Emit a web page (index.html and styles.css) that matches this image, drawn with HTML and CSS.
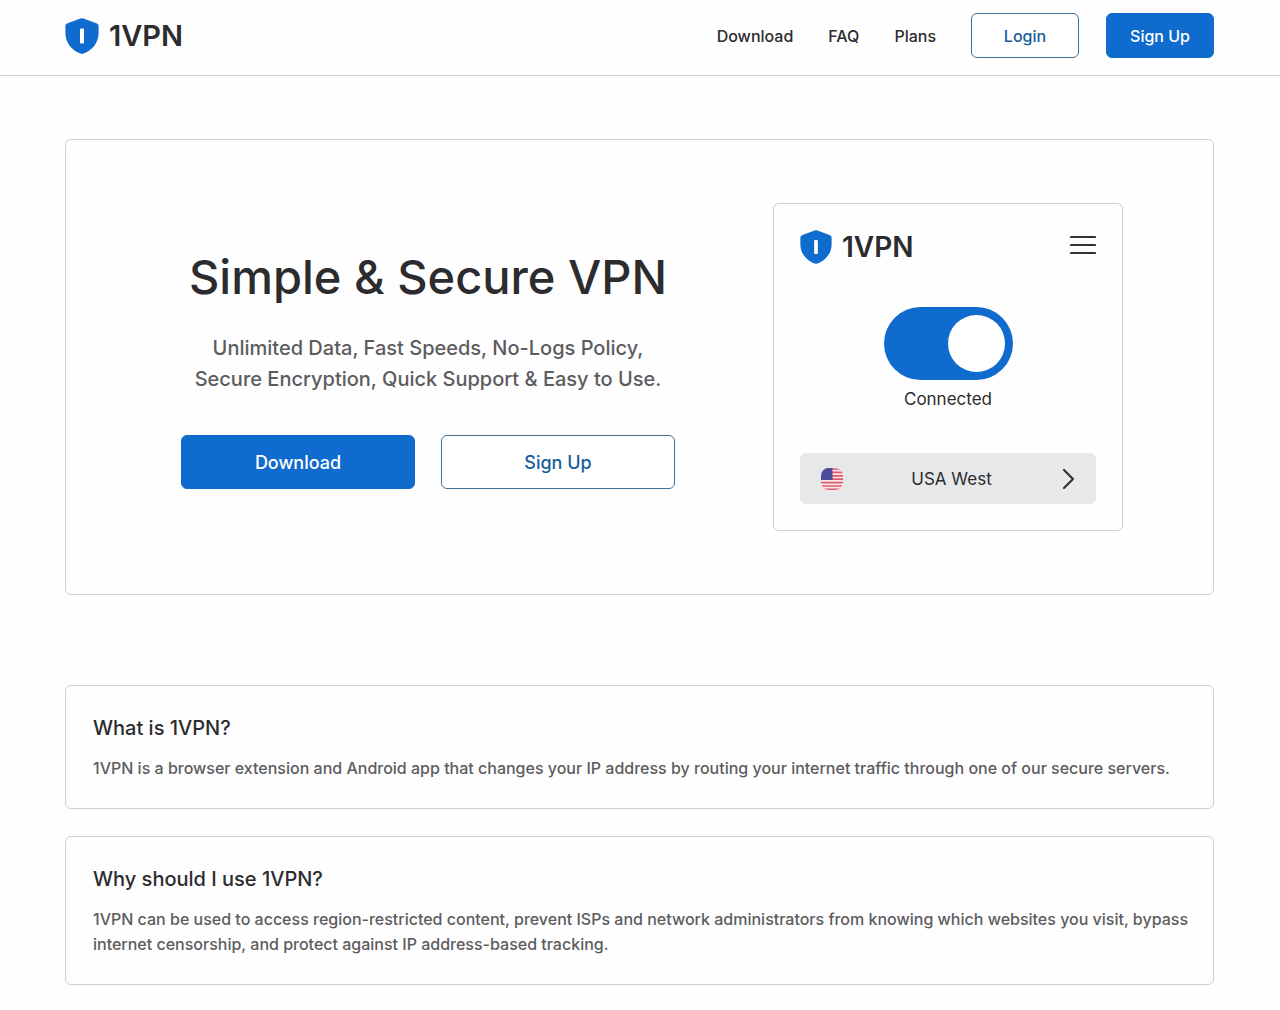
FILE: index.html
```html
<!DOCTYPE html>
<html lang="en">
<head>
<meta charset="utf-8">
<meta name="viewport" content="width=device-width, initial-scale=1">
<title>1VPN</title>
<link rel="stylesheet" href="styles.css">
</head>
<body>
<header class="site-header">
  <a class="brand" href="#">
    <svg class="brand-icon" viewBox="0 0 34 36" aria-hidden="true"><path fill="#0f6bce" d="M15.500 0.600 Q17 0 18.500 0.600 L32 5.400 Q33.600 6 33.600 8 V15 C33.600 25 27 32.500 18.500 35.600 Q17 36.200 15.500 35.600 C7 32.500 0.400 25 0.400 15 V8 Q0.400 6 2 5.400 Z"/><rect x="15" y="10.500" width="4" height="15" rx="1" fill="#fff"/></svg>
    <span>1VPN</span>
  </a>
  <nav class="nav">
    <div class="nav-links">
      <a href="#">Download</a>
      <a href="#">FAQ</a>
      <a href="#">Plans</a>
    </div>
    <div class="nav-actions">
      <button class="btn btn-outline" type="button">Login</button>
      <button class="btn btn-solid" type="button">Sign Up</button>
    </div>
  </nav>
</header>
<main class="page">
  <section class="hero">
    <div class="hero-copy">
      <h1>Simple &amp; Secure VPN</h1>
      <p>Unlimited Data, Fast Speeds, No-Logs Policy, Secure Encryption, Quick Support &amp; Easy to Use.</p>
      <div class="hero-actions">
        <button class="btn btn-large btn-solid" type="button">Download</button>
        <button class="btn btn-large btn-outline" type="button">Sign Up</button>
      </div>
    </div>
    <div class="app">
      <div class="app-bar">
        <div class="brand brand-small">
          <svg class="brand-icon" viewBox="0 0 34 36" aria-hidden="true"><path fill="#0f6bce" d="M15.500 0.600 Q17 0 18.500 0.600 L32 5.400 Q33.600 6 33.600 8 V15 C33.600 25 27 32.500 18.500 35.600 Q17 36.200 15.500 35.600 C7 32.500 0.400 25 0.400 15 V8 Q0.400 6 2 5.400 Z"/><rect x="15" y="10.500" width="4" height="15" rx="1" fill="#fff"/></svg>
          <span>1VPN</span>
        </div>
        <button class="menu" type="button" aria-label="Menu">
          <svg width="28" height="20" viewBox="0 0 28 20" aria-hidden="true"><path d="M3 2H27M3 10H27M3 18H27" stroke="#333" stroke-width="2.200" stroke-linecap="round"/></svg>
        </button>
      </div>
      <input class="toggle" id="connection" type="checkbox" checked>
      <label class="status" for="connection">Connected</label>
      <button class="location" type="button">
        <svg width="24" height="24" viewBox="0 0 24 24" aria-hidden="true">
          <defs><clipPath id="flag"><rect x="1" y="1" width="22" height="22" rx="8"/></clipPath></defs>
          <g clip-path="url(#flag)">
            <rect width="24" height="24" fill="#fae6e9"/>
            <path d="M0 2H24M0 5.400H24M0 8.800H24M0 12.200H24M0 15.600H24M0 19H24M0 22.400H24" stroke="#e25b6d" stroke-width="1.700"/>
            <rect width="12.500" height="13" fill="#4c4c9b"/>
          </g>
        </svg>
        <span>USA West</span>
        <svg width="20" height="24" viewBox="0 0 20 24" aria-hidden="true"><path d="M5 3L14 12L5 21" fill="none" stroke="#333" stroke-width="2.200" stroke-linecap="round" stroke-linejoin="round"/></svg>
      </button>
    </div>
  </section>
  <section class="questions">
    <article class="question">
      <h2>What is 1VPN?</h2>
      <p>1VPN is a browser extension and Android app that changes your IP address by routing your internet traffic through one of our secure servers.</p>
    </article>
    <article class="question">
      <h2>Why should I use 1VPN?</h2>
      <p>1VPN can be used to access region-restricted content, prevent ISPs and network administrators from knowing which websites you visit, bypass internet censorship, and protect against IP address-based tracking.</p>
    </article>
  </section>
</main>
</body>
</html>
```
FILE: styles.css
```css
* {
  box-sizing: border-box;
}

body {
  margin: 0;
  background: #fefefe;
  color: #2c2c2e;
  font-family: Inter, "Liberation Sans", sans-serif;
  font-size: 16px;
  font-weight: 500;
}

h1, h2, p {
  margin: 0;
  font-weight: 500;
}

a {
  color: inherit;
  text-decoration: none;
}

button {
  font: inherit;
  cursor: pointer;
}

.site-header {
  display: flex;
  align-items: center;
  justify-content: space-between;
  padding: 13px 66px 17px 65px;
  border-bottom: 1px solid #cfcfcf;
}

.brand {
  display: flex;
  align-items: center;
  gap: 10px;
  font-size: 29px;
  font-weight: 600;
  line-height: 36px;
}

.brand-icon {
  width: 34px;
  height: 36px;
}

.brand-small {
  font-size: 28px;
  line-height: 34px;
}

.brand-small .brand-icon {
  width: 32px;
  height: 34px;
}

.nav {
  display: flex;
  align-items: center;
  gap: 35px;
}

.nav-links {
  display: flex;
  gap: 35px;
}

.nav-actions {
  display: flex;
  gap: 27px;
}

.btn {
  width: 108px;
  height: 45px;
  padding: 0;
  border: 1px solid #0f6bce;
  border-radius: 6px;
}

.btn-solid {
  background: #0f6bce;
  color: #fff;
}

.btn-outline {
  background: #fff;
  border-color: #3f7099;
  color: #185c9c;
}

.btn-large {
  width: 234px;
  height: 54px;
  font-size: 18px;
}

.page {
  padding: 63px 66px 24px 65px;
}

.hero {
  display: flex;
  align-items: center;
  justify-content: center;
  gap: 98px;
  padding: 63px 0 63px 25px;
  border: 1px solid #cfcfcf;
  border-radius: 6px;
}

.hero-copy {
  width: 494px;
  text-align: center;
}

.hero-copy h1 {
  font-size: 47px;
  line-height: 64px;
}

.hero-copy p {
  margin: 24px 0 40px;
  color: #5c5c5e;
  font-size: 20px;
  line-height: 31px;
}

.hero-actions {
  display: flex;
  justify-content: space-between;
}

.app {
  display: flex;
  flex-direction: column;
  align-items: center;
  width: 350px;
  padding: 26px;
  border: 1px solid #cfcfcf;
  border-radius: 6px;
}

.app-bar {
  display: flex;
  align-items: flex-start;
  justify-content: space-between;
  align-self: stretch;
}

.menu {
  display: flex;
  padding: 5px 0;
  border: 0;
  background: none;
}

.toggle {
  appearance: none;
  display: flex;
  align-items: center;
  width: 129px;
  height: 73px;
  margin: 43px 0 6px;
  padding: 8px;
  border-radius: 37px;
  background: #0f6bce;
  cursor: pointer;
}

.toggle::before {
  content: "";
  width: 57px;
  height: 57px;
  border-radius: 50%;
  background: #fff;
}

.toggle:checked {
  justify-content: flex-end;
}

.status {
  font-size: 17px;
  font-weight: 400;
  line-height: 26px;
}

.location {
  display: flex;
  align-items: center;
  justify-content: space-between;
  align-self: stretch;
  height: 51px;
  margin-top: 41px;
  padding: 0 17px 0 20px;
  border: 0;
  border-radius: 6px;
  background: #e6e8ea;
  color: #2c2c2e;
  font-size: 17px;
  font-weight: 400;
}

.questions {
  display: flex;
  flex-direction: column;
  gap: 27px;
  margin-top: 90px;
}

.question {
  padding: 27px 24px 27px 27px;
  border: 1px solid #cfcfcf;
  border-radius: 6px;
}

.question h2 {
  font-size: 20px;
  line-height: 31px;
}

.question p {
  margin-top: 12px;
  color: #5c5c5e;
  line-height: 25px;
}
```
